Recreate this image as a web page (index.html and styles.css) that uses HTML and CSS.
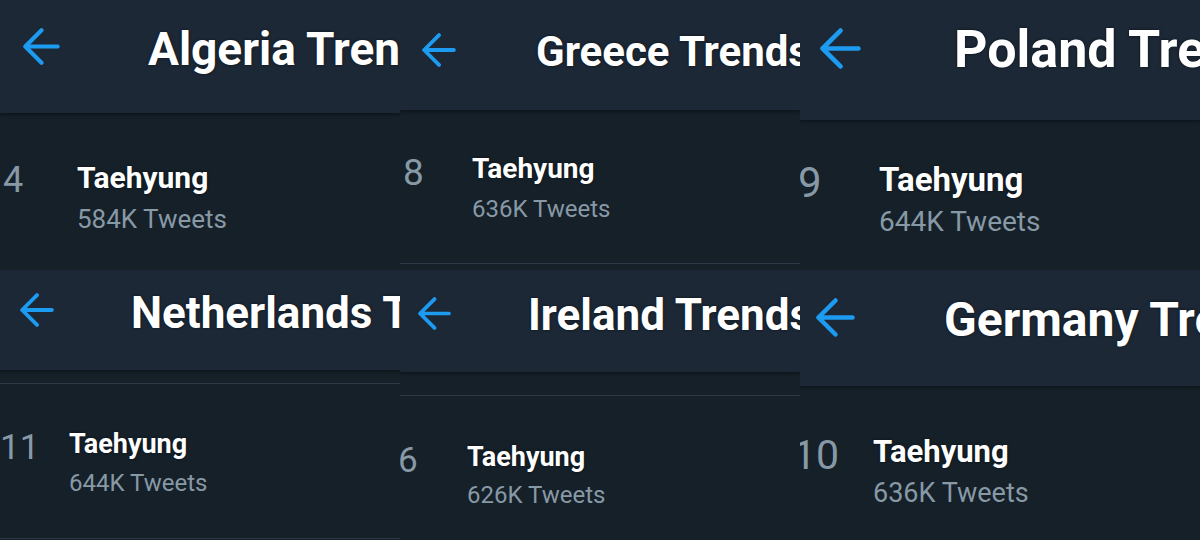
FILE: index.html
```html
<!DOCTYPE html>
<html lang="en">
<head>
<meta charset="utf-8">
<title>Trends</title>
<link rel="stylesheet" href="styles.css">
</head>
<body>
<main class="grid">
  <section class="tile t1">
    <header class="bar">
      <svg class="back" viewBox="0 0 40 40"><path d="M37.5 20H2.5M20 2.5L2.5 20L20 37.5"/></svg>
      <h1 class="title">Algeria Trends</h1>
    </header>
    <div class="list">
      <div class="trend">
        <span class="rank">4</span>
        <div class="info"><div class="name">Taehyung</div><div class="count">584K Tweets</div></div>
      </div>
    </div>
  </section>

  <section class="tile t2">
    <header class="bar">
      <svg class="back" viewBox="0 0 40 40"><path d="M37.5 20H2.5M20 2.5L2.5 20L20 37.5"/></svg>
      <h1 class="title">Greece Trends</h1>
    </header>
    <div class="list">
      <div class="trend">
        <span class="rank">8</span>
        <div class="info"><div class="name">Taehyung</div><div class="count">636K Tweets</div></div>
      </div>
      <div class="sep bottom"></div>
    </div>
  </section>

  <section class="tile t3">
    <header class="bar">
      <svg class="back" viewBox="0 0 40 40"><path d="M37.5 20H2.5M20 2.5L2.5 20L20 37.5"/></svg>
      <h1 class="title">Poland Trends</h1>
    </header>
    <div class="list">
      <div class="trend">
        <span class="rank">9</span>
        <div class="info"><div class="name">Taehyung</div><div class="count">644K Tweets</div></div>
      </div>
    </div>
  </section>

  <section class="tile t4">
    <header class="bar">
      <svg class="back" viewBox="0 0 40 40"><path d="M37.5 20H2.5M20 2.5L2.5 20L20 37.5"/></svg>
      <h1 class="title">Netherlands Trends</h1>
    </header>
    <div class="list">
      <div class="sep top"></div>
      <div class="trend">
        <span class="rank">11</span>
        <div class="info"><div class="name">Taehyung</div><div class="count">644K Tweets</div></div>
      </div>
      <div class="sep bottom"></div>
    </div>
  </section>

  <section class="tile t5">
    <header class="bar">
      <svg class="back" viewBox="0 0 40 40"><path d="M37.5 20H2.5M20 2.5L2.5 20L20 37.5"/></svg>
      <h1 class="title">Ireland Trends</h1>
    </header>
    <div class="list">
      <div class="sep top"></div>
      <div class="trend">
        <span class="rank">6</span>
        <div class="info"><div class="name">Taehyung</div><div class="count">626K Tweets</div></div>
      </div>
    </div>
  </section>

  <section class="tile t6">
    <header class="bar">
      <svg class="back" viewBox="0 0 40 40"><path d="M37.5 20H2.5M20 2.5L2.5 20L20 37.5"/></svg>
      <h1 class="title">Germany Trends</h1>
    </header>
    <div class="list">
      <div class="trend">
        <span class="rank">10</span>
        <div class="info"><div class="name">Taehyung</div><div class="count">636K Tweets</div></div>
      </div>
    </div>
  </section>
</main>
</body>
</html>
```

FILE: styles.css
```css
* {
  box-sizing: border-box;
  margin: 0;
  padding: 0;
}

html, body {
  width: 1200px;
  height: 540px;
  overflow: hidden;
}

body {
  background: #152029;
  font-family: Roboto, "Noto Sans", "Liberation Sans", sans-serif;
}

.grid {
  display: grid;
  grid-template-columns: repeat(3, 400px);
  grid-template-rows: repeat(2, 270px);
}

.tile {
  display: flex;
  flex-direction: column;
  overflow: hidden;
  background: #152029;
}

.bar {
  flex: none;
  height: var(--hh);
  background: #1c2836;
  display: flex;
  align-items: flex-start;
  box-shadow: 0 2px 3px rgba(0, 0, 0, 0.35);
}

.back {
  flex: none;
  width: var(--as);
  height: var(--as);
  margin: var(--ay) 0 0 var(--ax);
  fill: none;
  stroke: #1d9bf0;
  stroke-width: 4.5;
  stroke-linecap: round;
  stroke-linejoin: round;
}

.title {
  font-size: var(--tf);
  line-height: 1;
  font-weight: 700;
  color: #ffffff;
  white-space: nowrap;
  margin: var(--ty) 0 0 var(--tx);
  text-shadow: 0 0 3px rgba(0, 0, 0, 0.6);
}

.list {
  flex: 1;
  display: flex;
  flex-direction: column;
}

.sep {
  flex: none;
  height: 1px;
  background: #2d3946;
}

.sep.top {
  margin-top: var(--st);
}

.sep.bottom {
  margin-top: auto;
  margin-bottom: var(--sb);
}

.trend {
  display: flex;
  align-items: flex-start;
  margin-top: var(--rt);
}

.rank {
  flex: 0 0 calc(var(--nx) - var(--rx));
  margin-left: var(--rx);
  margin-top: var(--ro);
  font-size: var(--rf);
  line-height: 1;
  color: #8899a6;
}

.name {
  font-size: var(--cf);
  line-height: 1;
  font-weight: 700;
  color: #ffffff;
  text-shadow: 0 0 3px rgba(0, 0, 0, 0.5);
}

.count {
  font-size: var(--sf);
  line-height: 1;
  color: #8899a6;
  margin-top: var(--sg);
}

/* per-screenshot scale */
.t1 {
  --hh: 113px; --as: 37px; --ax: 23px; --ay: 28px;
  --tf: 46px; --tx: 88px; --ty: 26px;
  --rt: 50px; --rx: 3px; --nx: 77px; --rf: 36px; --ro: -1px;
  --cf: 30px; --sf: 26px; --sg: 13px;
}

.t2 {
  --hh: 110px; --as: 34px; --ax: 22px; --ay: 33px;
  --tf: 42px; --tx: 80px; --ty: 31px;
  --rt: 45px; --rx: 3px; --nx: 72px; --rf: 37px; --ro: -1px;
  --cf: 28px; --sf: 24px; --sg: 14px;
  --sb: 6px;
}

.t3 {
  --hh: 120px; --as: 41px; --ax: 20px; --ay: 28px;
  --tf: 52px; --tx: 93px; --ty: 24px;
  --rt: 43px; --rx: -2px; --nx: 79px; --rf: 42px; --ro: -1px;
  --cf: 33px; --sf: 28px; --sg: 12px;
}

.t4 {
  --hh: 100px; --as: 34px; --ax: 20px; --ay: 23px;
  --tf: 44px; --tx: 77px; --ty: 21px;
  --st: 13px;
  --rt: 47px; --rx: 0px; --nx: 69px; --rf: 35px; --ro: -1px;
  --cf: 27px; --sf: 24px; --sg: 13px;
  --sb: 1px;
}

.t5 {
  --hh: 102px; --as: 33px; --ax: 18px; --ay: 27px;
  --tf: 44px; --tx: 77px; --ty: 23px;
  --st: 23px;
  --rt: 48px; --rx: -2px; --nx: 67px; --rf: 35px; --ro: -1px;
  --cf: 27px; --sf: 24px; --sg: 12px;
}

.t6 {
  --hh: 116px; --as: 39px; --ax: 16px; --ay: 28px;
  --tf: 48px; --tx: 89px; --ty: 26px;
  --rt: 50px; --rx: -7px; --nx: 73px; --rf: 41px; --ro: -1px;
  --cf: 31px; --sf: 27px; --sg: 13px;
}
```
